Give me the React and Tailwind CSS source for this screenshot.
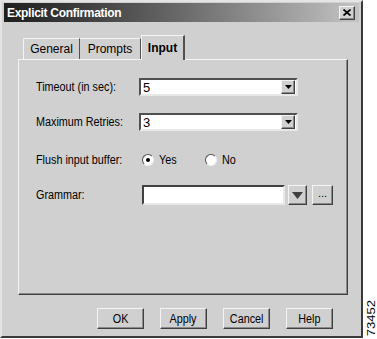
import React from "react";

const font = { fontFamily: '"Liberation Sans", Arial, sans-serif' };

function Raised({ className = "", children }) {
    return (
        <div
            className={`flex items-center justify-center bg-[#d0d0d0] border border-t-[#f4f4f4] border-l-[#f4f4f4] border-r-[#404040] border-b-[#404040] shadow-[inset_-1px_-1px_0_#8a8a8a] ${className}`}
        >
            {children}
        </div>
    );
}

function Combo({ value }) {
    return (
        <div className="flex items-center w-[159px] h-[18px] bg-white border-2 border-t-[#505050] border-l-[#505050] border-r-[#e8e8e8] border-b-[#e8e8e8]">
            <span className="flex-1 pl-[2px] text-[13px] leading-none text-black">{value}</span>
            <Raised className="w-[14px] h-[14px] mr-[1px]">
                <svg width="7" height="4" viewBox="0 0 7 4">
                    <path d="M0 0h7L3.5 4z" fill="#000" />
                </svg>
            </Raised>
        </div>
    );
}

function Radio({ checked, label }) {
    return (
        <div className="flex items-center gap-[5px]">
            <div className="w-[12px] h-[12px] rounded-full bg-white border border-t-[#505050] border-l-[#505050] border-r-[#f0f0f0] border-b-[#f0f0f0] flex items-center justify-center">
                {checked && <div className="w-[4px] h-[4px] rounded-full bg-black" />}
            </div>
            <span className="text-[12px] text-black inline-block scale-x-90 origin-left">{label}</span>
        </div>
    );
}

function Field({ label, children, className = "" }) {
    return (
        <div className={`flex items-center ${className}`}>
            <span className="w-[103px] text-[12px] text-black whitespace-nowrap">
                <span className="inline-block scale-x-90 origin-left">{label}</span>
            </span>
            {children}
        </div>
    );
}

export default function App() {
    return (
        <div className="w-[377px] h-[339px] bg-white flex select-none" style={font}>
            <div className="w-[363px] h-[338px] bg-[#d0d0d0] border-2 border-t-[#e4e4e4] border-l-[#e4e4e4] border-r-[#3a3a3a] border-b-[#3a3a3a] flex flex-col px-[2px] pt-[1px]">
                {/* title bar */}
                <div className="h-[19px] flex items-center justify-between pl-[3px] pr-[4px] bg-gradient-to-r from-[#1e1e1e] via-[#6a6a6a] to-[#c4c4c4]">
                    <span className="text-white font-bold text-[12px] tracking-[-0.3px]">Explicit Confirmation</span>
                    <Raised className="w-[16px] h-[14px]">
                        <svg width="8" height="7" viewBox="0 0 8 7">
                            <path d="M0.5 0.5L7.5 6.5M7.5 0.5L0.5 6.5" stroke="#000" strokeWidth="1.7" />
                        </svg>
                    </Raised>
                </div>

                {/* tabs */}
                <div className="flex items-end ml-[16px] mt-[12px] h-[25px] pl-[3px]">
                    <div className="h-[21px] w-[57px] flex items-center justify-center border-t border-l border-t-[#f4f4f4] border-l-[#f4f4f4] border-r border-r-[#505050] rounded-tl-[2px] text-[12px] text-black">
                        General
                    </div>
                    <div className="h-[21px] w-[61px] flex items-center justify-center border-t border-t-[#f4f4f4] border-r border-r-[#505050] text-[12px] text-black">
                        Prompts
                    </div>
                    <div className="relative h-[25px] w-[44px] -mb-[1px] z-10 bg-[#d0d0d0] flex items-start justify-center pt-[3px] border-t border-l border-t-[#f4f4f4] border-l-[#f4f4f4] border-r-2 border-r-[#505050] text-[12px] font-bold text-black">
                        Input
                    </div>
                </div>

                {/* panel */}
                <div className="ml-[14px] w-[330px] h-[236px] border border-t-[#f4f4f4] border-l-[#f4f4f4] border-r-[#404040] border-b-[#404040] shadow-[inset_-1px_-1px_0_#8a8a8a] flex flex-col pl-[17px] pt-[18px]">
                    <Field label="Timeout (in sec):">
                        <Combo value="5" />
                    </Field>
                    <Field label="Maximum Retries:" className="mt-[17px]">
                        <Combo value="3" />
                    </Field>
                    <Field label="Flush input buffer:" className="mt-[20px] h-[18px]">
                        <div className="flex items-center gap-[26px] pl-[3px]">
                            <Radio checked label="Yes" />
                            <Radio label="No" />
                        </div>
                    </Field>
                    <Field label="Grammar:" className="mt-[16px]">
                        <div className="flex items-center ml-[3px]">
                            <div className="w-[143px] h-[20px] bg-white border-2 border-t-[#404040] border-l-[#404040] border-r-[#e8e8e8] border-b-[#e8e8e8]" />
                            <Raised className="w-[19px] h-[20px] ml-[3px]">
                                <svg width="11" height="7" viewBox="0 0 11 7">
                                    <path d="M0 0h11L5.5 7z" fill="#404040" />
                                </svg>
                            </Raised>
                            <Raised className="w-[21px] h-[20px] ml-[5px]">
                                <span className="text-[11px] leading-none text-black -mt-[4px]">...</span>
                            </Raised>
                        </div>
                    </Field>
                </div>

                {/* buttons */}
                <div className="flex justify-end gap-[16px] mt-[13px] mr-[26px]">
                    {["OK", "Apply", "Cancel", "Help"].map((b) => (
                        <Raised key={b} className="w-[47px] h-[21px]">
                            <span className="text-[12px] text-black inline-block scale-x-90">{b}</span>
                        </Raised>
                    ))}
                </div>
            </div>
            <div className="flex-1 flex flex-col justify-end items-center pb-[3px]">
                <span className="text-[13px] leading-none text-black [writing-mode:vertical-rl] rotate-180 scale-x-90">73452</span>
            </div>
        </div>
    );
}
